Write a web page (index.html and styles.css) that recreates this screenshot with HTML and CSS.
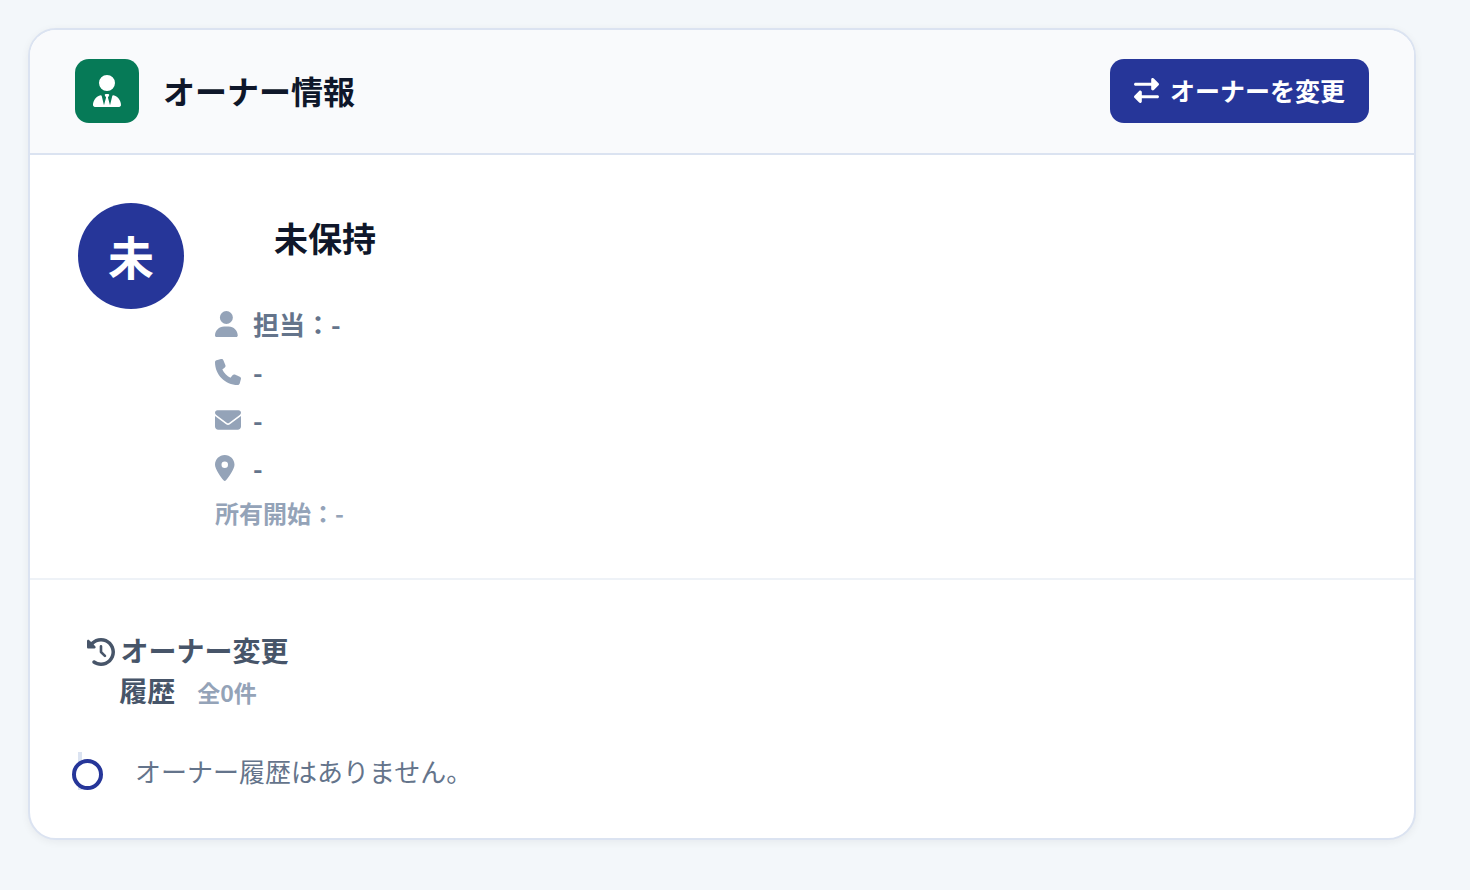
FILE: index.html
```html
<!DOCTYPE html>
<html lang="ja">
<head>
  <meta charset="UTF-8">
  <meta name="viewport" content="width=device-width, initial-scale=1.0">
  <title>オーナー情報</title>
  <link rel="stylesheet" href="styles.css">
</head>
<body>

  <section class="card">
    <header class="card-header">
      <div class="card-icon">
        <svg viewBox="0 0 448 512" width="28" height="32" fill="currentColor" aria-hidden="true"><path d="M96 128a128 128 0 1 0 256 0A128 128 0 1 0 96 128zm94.5 200.2l18.6 31L175.8 483.1l-36-146.9c-2-8.1-9.8-13.4-17.9-11.3C51.9 342.4 0 405.8 0 481.3c0 17 13.8 30.7 30.7 30.7H162.5c0 0 0 0 .1 0H168 280h5.5c0 0 0 0 .1 0H417.3c17 0 30.7-13.8 30.7-30.7c0-75.5-51.9-138.9-121.9-156.4c-8.1-2-15.9 3.3-17.9 11.3l-36 146.9L238.9 359.2l18.6-31c6.4-10.7-1.3-24.2-13.7-24.2H224 204.3c-12.4 0-20.1 13.6-13.7 24.2z"/></svg>
      </div>
      <h2 class="card-title">オーナー情報</h2>
      <button type="button" class="change-btn">
        <svg viewBox="0 0 512 512" width="25" height="25" fill="currentColor" aria-hidden="true"><path d="M32 96l320 0V32c0-12.9 7.8-24.6 19.8-29.6s25.7-2.2 34.9 6.9l96 96c6 6 9.4 14.1 9.4 22.6s-3.4 16.6-9.4 22.6l-96 96c-9.2 9.2-22.9 11.9-34.9 6.9s-19.8-16.6-19.8-29.6V160L32 160c-17.7 0-32-14.3-32-32s14.3-32 32-32zM480 352c17.7 0 32 14.3 32 32s-14.3 32-32 32H160v64c0 12.9-7.8 24.6-19.8 29.6s-25.7 2.2-34.9-6.9l-96-96c-6-6-9.4-14.1-9.4-22.6s3.4-16.6 9.4-22.6l96-96c9.2-9.2 22.9-11.9 34.9-6.9s19.8 16.6 19.8 29.6l0 64H480z"/></svg>
        オーナーを変更
      </button>
    </header>

    <div class="owner">
      <div class="avatar">未</div>
      <div class="owner-info">
        <h3 class="owner-name">未保持</h3>
        <ul class="contact">
          <li>
            <svg class="contact-icon" viewBox="0 0 512 512" fill="currentColor" aria-hidden="true"><path d="M224 256A128 128 0 1 0 224 0a128 128 0 1 0 0 256zm-45.700 48C79.800 304 0 383.800 0 482.300C0 498.700 13.300 512 29.700 512H418.300c16.400 0 29.700-13.300 29.700-29.700C448 383.800 368.200 304 269.700 304H178.300z"/></svg>
            <span>担当：-</span>
          </li>
          <li>
            <svg class="contact-icon" viewBox="0 0 512 512" fill="currentColor" aria-hidden="true"><path d="M164.900 24.600c-7.700-18.600-28-28.500-47.400-23.200l-88 24C12.100 30.200 0 46 0 64C0 311.400 200.600 512 448 512c18 0 33.800-12.100 38.600-29.500l24-88c5.300-19.400-4.600-39.700-23.200-47.400l-96-40c-16.300-6.800-35.200-2.100-46.300 11.600L304.700 368C234.300 334.700 177.300 277.700 144 207.300L193.300 167c13.700-11.200 18.400-30 11.600-46.300l-40-96z"/></svg>
            <span>-</span>
          </li>
          <li>
            <svg class="contact-icon" viewBox="0 0 512 512" fill="currentColor" aria-hidden="true"><path d="M48 64C21.500 64 0 85.500 0 112c0 15.100 7.100 29.300 19.200 38.400L236.800 313.600c11.400 8.500 27 8.500 38.400 0L492.800 150.400c12.100-9.100 19.200-23.300 19.200-38.400c0-26.500-21.500-48-48-48H48zM0 176V384c0 35.300 28.700 64 64 64H448c35.300 0 64-28.700 64-64V176L294.400 339.200c-22.800 17.100-54 17.100-76.800 0L0 176z"/></svg>
            <span>-</span>
          </li>
          <li>
            <svg class="contact-icon" viewBox="0 0 512 512" fill="currentColor" aria-hidden="true"><path d="M215.700 499.200C267 435 384 279.400 384 192C384 86 298 0 192 0S0 86 0 192c0 87.400 117 243 168.300 307.200c12.300 15.300 35.100 15.300 47.400 0zM192 128a64 64 0 1 1 0 128 64 64 0 1 1 0-128z"/></svg>
            <span>-</span>
          </li>
        </ul>
        <p class="since">所有開始：-</p>
      </div>
    </div>

    <div class="history">
      <h3 class="history-title">
        <svg class="history-icon" viewBox="0 0 512 512" fill="currentColor" aria-hidden="true"><path d="M75 75L41 41C25.900 25.900 0 36.600 0 57.900V168c0 13.300 10.700 24 24 24H134.100c21.400 0 32.100-25.900 17-41l-30.800-30.800C155 85.500 203 64 256 64c106 0 192 86 192 192s-86 192-192 192c-40.800 0-78.600-12.700-109.700-34.400c-14.500-10.100-34.400-6.600-44.600 7.900s-6.600 34.400 7.900 44.600C151.200 495 201.700 512 256 512c141.400 0 256-114.600 256-256S397.400 0 256 0C185.300 0 121.300 28.700 75 75zm181 53c-13.300 0-24 10.700-24 24V256c0 6.400 2.500 12.500 7 17l72 72c9.400 9.400 24.600 9.400 33.900 0s9.400-24.600 0-33.900l-65-65V152c0-13.300-10.700-24-24-24z"/></svg>オーナー変更<br>履歴<span class="count">全0件</span>
      </h3>
      <ul class="timeline">
        <li>オーナー履歴はありません。</li>
      </ul>
    </div>
  </section>

</body>
</html>
```
FILE: styles.css
```css
*,
*::before {
  box-sizing: border-box;
}

body {
  margin: 0;
  padding: 28px 54px 28px 28px;
  background: #f3f7fa;
  font-family: "Noto Sans CJK JP", sans-serif;
  color: #0f172a;
}

h2, h3, p, ul {
  margin: 0;
  padding: 0;
}

ul {
  list-style: none;
}

.card {
  background: #fff;
  border: 2px solid #dbe3f1;
  border-radius: 28px;
  box-shadow: 0 2px 8px rgba(15, 23, 42, 0.06);
  overflow: hidden;
}

.card-header {
  display: flex;
  align-items: center;
  gap: 24px;
  padding: 29px 45px 30px;
  background: #f9fafc;
  border-bottom: 2px solid #dbe3f1;
}

.card-icon {
  display: flex;
  align-items: center;
  justify-content: center;
  width: 64px;
  height: 64px;
  border-radius: 14px;
  background: #067a57;
  color: #fff;
}

.card-title {
  padding-bottom: 2px;
  font-size: 32px;
  line-height: 48px;
  font-weight: 700;
}

.change-btn {
  display: flex;
  align-items: center;
  gap: 11px;
  height: 64px;
  margin-left: auto;
  padding: 0 24px 2px;
  border: none;
  border-radius: 14px;
  background: #263699;
  color: #fff;
  font-family: inherit;
  font-size: 25px;
  font-weight: 700;
  cursor: pointer;
}

.owner {
  display: flex;
  align-items: flex-start;
  gap: 31px;
  padding: 48px;
  border-bottom: 2px solid #eef2f7;
}

.avatar {
  display: flex;
  align-items: center;
  justify-content: center;
  flex-shrink: 0;
  width: 106px;
  height: 106px;
  padding-bottom: 2px;
  border-radius: 50%;
  background: #263699;
  color: #fff;
  font-size: 46px;
  font-weight: 700;
}

.owner-name {
  width: 220px;
  padding: 11px 0 12px;
  margin-bottom: 30px;
  font-size: 34px;
  line-height: 48px;
  font-weight: 700;
  text-align: center;
}

.contact li {
  display: flex;
  align-items: center;
  gap: 12px;
  margin-bottom: 8px;
  color: #64748b;
  font-size: 26px;
  line-height: 40px;
  font-weight: 700;
}

.contact-icon {
  width: 26px;
  height: 26px;
  color: #94a3b8;
}

.since {
  color: #94a3b8;
  font-size: 24px;
  line-height: 34px;
  font-weight: 700;
}

.history {
  padding: 46px 48px 48px;
}

.history-title {
  width: 220px;
  padding: 4px 8px;
  margin-bottom: 36px;
  color: #475569;
  font-size: 28px;
  line-height: 40px;
  font-weight: 700;
  text-align: center;
}

.history-icon {
  width: 28px;
  height: 28px;
  margin-right: 5px;
  vertical-align: -4px;
}

.count {
  margin-left: 22px;
  color: #94a3b8;
  font-size: 23px;
}

.timeline {
  border-left: 4px solid #dbe3f1;
}

.timeline li {
  position: relative;
  padding-left: 53px;
  color: #64748b;
  font-size: 26px;
  line-height: 38px;
}

.timeline li::before {
  content: "";
  position: absolute;
  left: -10px;
  top: 7px;
  width: 31px;
  height: 31px;
  border: 4px solid #263699;
  border-radius: 50%;
  background: #fff;
}
```
